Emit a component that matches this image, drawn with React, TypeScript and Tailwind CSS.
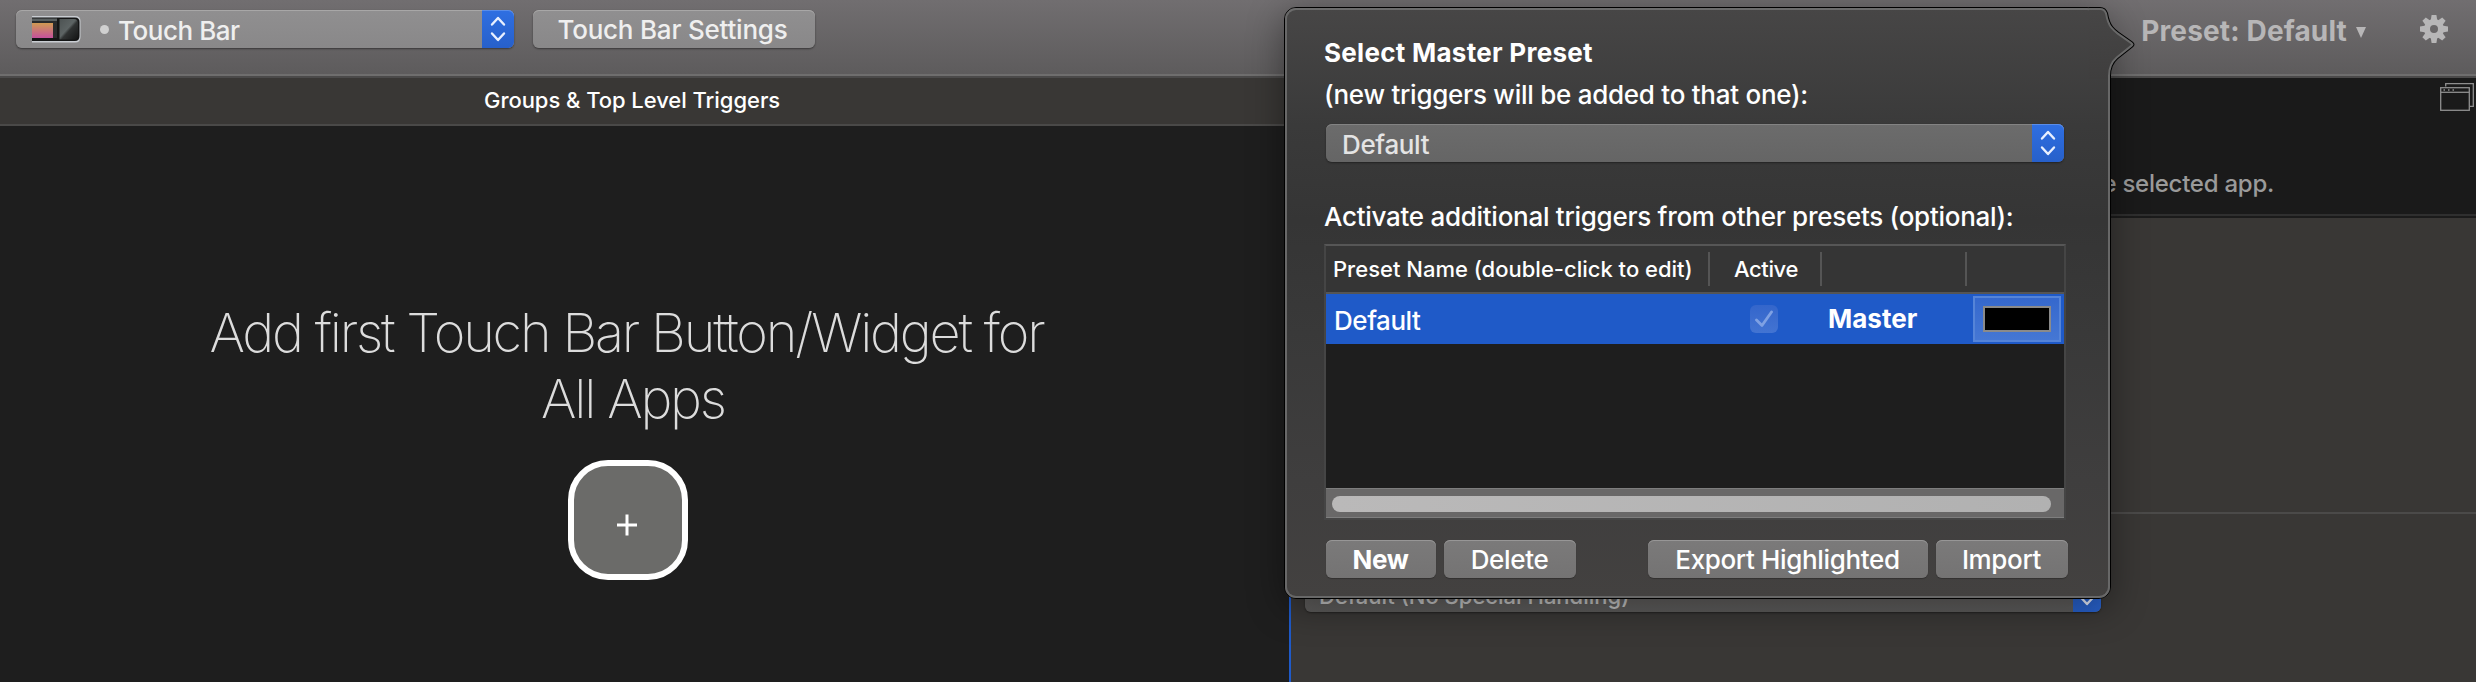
import React from 'react';

function Chevrons({ className = '' }: { className?: string }) {
  return (
    <svg viewBox="0 0 16 26" className={`h-[26px] w-4 ${className}`} fill="none" stroke="#e9f0ff" strokeWidth="2.4" strokeLinecap="round" strokeLinejoin="round">
      <path d="M2 8.5 L8 2 L14 8.5" />
      <path d="M2 17.5 L8 24 L14 17.5" />
    </svg>
  );
}

function DeviceIcon() {
  return (
    <svg viewBox="0 0 52 32" className="h-8 w-[52px]">
      <defs>
        <linearGradient id="screen" x1="0" y1="0" x2="0" y2="1">
          <stop offset="0" stopColor="#d09a52" />
          <stop offset="1" stopColor="#c4519c" />
        </linearGradient>
        <linearGradient id="pad" x1="0" y1="0" x2="1" y2="1">
          <stop offset="0" stopColor="#4d5353" />
          <stop offset="0.45" stopColor="#5d6464" />
          <stop offset="0.55" stopColor="#303333" />
          <stop offset="1" stopColor="#141515" />
        </linearGradient>
      </defs>
      <path d="M0 3 H43 Q48.5 3 48.5 8 V24 Q48.5 29.5 43 29.5 H0 Z" fill="#c9cdd2" />
      <path d="M0 4.5 H43 Q47.5 4.5 47.5 9 V23 Q47.5 28 43 28 H0 Z" fill="#141515" />
      <path d="M0 5.5 H25 V8 H0 Z" fill="#5a6060" />
      <path d="M0 8 H25 V25 H0 Z" fill="#292a2b" />
      <rect x="0" y="10" width="21" height="15" fill="url(#screen)" />
      <path d="M27.5 6 H42 Q46 6 46 10 V22 Q46 26.500 42 26.500 H27.500 Z" fill="url(#pad)" />
    </svg>
  );
}

function Gear() {
  return (
    <svg viewBox="-14 -14 28 28" className="h-7 w-7" fill="#b7b6b7">
      {[0, 45, 90, 135, 180, 225, 270, 315].map((a) => (
        <path key={a} d="M-3.400 -8 L-2.400 -14 H2.400 L3.400 -8 Z" transform={`rotate(${a})`} />
      ))}
      <circle r="7" fill="none" stroke="#b7b6b7" strokeWidth="6" />
    </svg>
  );
}

function WindowsIcon() {
  return (
    <svg viewBox="0 0 34 28" className="h-7 w-[34px]" fill="none" stroke="#8f8f8f" strokeWidth="1.300">
      <path d="M5.700 3.500 V0.700 H33.300 V23.300 H30" />
      <rect x="0.700" y="4.700" width="28.600" height="22.600" />
      <path d="M0.700 9.300 H29.300" />
      <path d="M3.500 7 h1.500 M8 7 h1.500 M12.500 7 h1.500" />
    </svg>
  );
}

function PopoverArrow() {
  const d = 'M-20 0 H11 Q17 0 19 6 Q20.500 15 24 19.500 Q26 22 30 25 L43.500 34.500 Q47.500 37.500 43.500 40.500 L29 52 Q22 58 22 69 V100 H-20 Z';
  return (
    <svg viewBox="0 0 47 72" className="absolute -top-px left-[804px] h-[72px] w-[47px]">
      <defs>
        <clipPath id="edge"><path d={d} /></clipPath>
        <linearGradient id="fade" gradientUnits="userSpaceOnUse" x1="0" y1="0" x2="0" y2="72">
          <stop offset="0" stopColor="#474646" />
          <stop offset="1" stopColor="#3f3e3e" />
        </linearGradient>
      </defs>
      <g clipPath="url(#edge)">
        <path d={d} fill="url(#fade)" />
        <path d={d} fill="none" stroke="#686868" strokeWidth="6" />
        <path d={d} fill="none" stroke="#000" strokeWidth="2" />
      </g>
    </svg>
  );
}

const pushButton =
  'flex h-[38px] items-center justify-center rounded-[6px] bg-linear-to-b from-[#7b7a7a] to-[#747373] pt-px text-[26px] tracking-[-0.35px] text-white shadow-[inset_0_1px_0_#979696,0_1px_1px_rgba(0,0,0,0.25)]';

const blueCap =
  'flex h-full items-center justify-center rounded-r-[6px] bg-linear-to-b from-[#2f6fe2] to-[#2760ca] shadow-[inset_0_1px_0_#5a8de8]';

function PresetTable() {
  return (
    <div className="mt-[11px] flex h-[276px] w-[742px] flex-col border-2 border-[#454545] border-t-[#565656] bg-[#1e1e1e]">
      <div className="flex h-12 shrink-0 items-center border-b-2 border-[#555] bg-[#353535] text-[22px] font-medium">
        <div className="flex h-[34px] w-[384px] items-center border-r-2 border-[#555] pb-px pl-[7px]">Preset Name (double-click to edit)</div>
        <div className="flex h-[34px] w-28 items-center border-r-2 border-[#555] pb-px pl-6 tracking-[-0.4px]">Active</div>
        <div className="h-[34px] w-[145px] border-r-2 border-[#555]" />
      </div>
      <div className="flex h-[50px] shrink-0 items-center bg-[#1f5ac8] text-[26px]">
        <div className="w-[384px] pt-[3px] pl-2 font-medium tracking-[-0.45px]">Default</div>
        <div className="w-28 pl-10">
          <div className="flex h-7 w-7 items-center justify-center rounded-[6px] bg-linear-to-b from-[#3466cb] to-[#4374d2]">
            <svg viewBox="0 0 18 18" className="h-[18px] w-[18px]" fill="none" stroke="#7fa1e3" strokeWidth="2.800" strokeLinecap="round" strokeLinejoin="round">
              <path d="M1.500 10 L7 15.500 L16.500 2" />
            </svg>
          </div>
        </div>
        <div className="w-[145px] pl-[6px] font-bold">Master</div>
        <div className="ml-[6px] flex h-[46px] w-[88px] items-center justify-center border-2 border-[#5584d8] bg-linear-to-b from-[#3568cd] to-[#4577d4]">
          <div className="h-[26px] w-[68px] border-2 border-[#8a8a8a] bg-black" />
        </div>
      </div>
      <div className="flex-1" />
      <div className="flex h-[30px] shrink-0 items-center border-y border-[#7e7e7e] bg-[#696868] pr-[13px] pl-[6px]">
        <div className="mt-px h-4 flex-1 rounded-full bg-linear-to-r from-[#bab9b9] to-[#b1b1b1]" />
      </div>
    </div>
  );
}

function PresetPopover() {
  return (
    <div className="absolute top-[7px] left-[1284px] h-[592px] w-[827px] rounded-[12px] rounded-tr-[24px] border border-black bg-[linear-gradient(180deg,#474646_0%,#3a3a3a_20%,#353535_36%,#393939_55%,#3f3e3e_80%,#434140_100%)] text-white shadow-[0_8px_36px_rgba(0,0,0,0.4)]">
      <div className="h-full rounded-[11px] rounded-tr-[23px] border-2 border-[#686868] border-t-[#6c6c6c] pl-[37px]">
        <div className="flex flex-col">
          <div className="mt-[26px] flex h-[33px] items-center text-[26px] font-bold tracking-[0.280px]">Select Master Preset</div>
          <div className="mt-[9px] flex h-[33px] items-center text-[26px] font-medium tracking-[-0.260px]">(new triggers will be added to that one):</div>
          <div className="mt-[13px] ml-[2px] flex h-[38px] w-[738px] items-center rounded-[6px] bg-linear-to-b from-[#6c6c6c] to-[#656565] shadow-[inset_0_1px_0_#838383,0_1px_2px_rgba(0,0,0,0.4)]">
            <span className="flex-1 pt-[3px] pl-4 text-[26px] font-[450] tracking-[-0.350px] text-[#e4e4e4]">Default</span>
            <div className={`${blueCap} w-8`}><Chevrons /></div>
          </div>
          <div className="mt-[38px] flex h-[33px] items-center text-[26px] font-medium tracking-[-0.280px]">Activate additional triggers from other presets (optional):</div>
          <PresetTable />
          <div className="mt-5 ml-[2px] flex w-[742px]">
            <button className={`${pushButton} w-[110px] pr-px font-bold`}>New</button>
            <button className={`${pushButton} ml-2 w-[132px] pr-px font-medium`}>Delete</button>
            <button className={`${pushButton} ml-auto w-[280px] pr-px font-medium`}>Export Highlighted</button>
            <button className={`${pushButton} ml-2 w-[132px] pr-px font-medium`}>Import</button>
          </div>
        </div>
      </div>
      <PopoverArrow />
    </div>
  );
}

export default function App() {
  return (
    <div className="relative flex h-[682px] w-[2476px] flex-col overflow-hidden bg-[#1e1e1e] font-[Inter,sans-serif] leading-none whitespace-nowrap">
      <header className="flex h-[78px] shrink-0 items-start border-b-2 border-[#4b4a4a] bg-linear-to-b from-[#716e70] to-[#5d5b5c] shadow-[inset_0_-2px_0_#6f6e6e]">
        <div className="mt-[10px] ml-4 flex h-[38px] w-[498px] items-center rounded-[6px] bg-linear-to-b from-[#908f90] to-[#898889] pl-4 shadow-[inset_0_1px_0_#a8a7a7,0_1px_2px_rgba(0,0,0,0.45)]">
          <DeviceIcon />
          <span className="ml-4 h-[9px] w-[9px] rounded-full bg-[#d0d0d0]" />
          <span className="ml-[9px] flex-1 pt-[3px] text-[26px] font-[450] tracking-[-0.450px] text-[#efefef]">Touch Bar</span>
          <div className={`${blueCap} w-8`}><Chevrons /></div>
        </div>
        <button className="mt-[10px] ml-[19px] flex h-[38px] w-[282px] items-center justify-center rounded-[6px] bg-linear-to-b from-[#908f90] to-[#898889] pt-px pr-[3px] text-[26px] font-[450] tracking-[-0.220px] text-[#efefef] shadow-[inset_0_1px_0_#a8a7a7,0_1px_2px_rgba(0,0,0,0.45)]">
          Touch Bar Settings
        </button>
        <div className="mt-[15px] mr-7 ml-auto flex h-7 items-center text-[#b7b6b7]">
          <span className="pt-[3px] text-[28px] font-bold tracking-[0.150px]">Preset: Default</span>
          <svg viewBox="0 0 10 11" className="mt-[7px] ml-[9px] h-[11px] w-[10px]" fill="#b7b6b7"><path d="M0 0 H10 L5 11 Z" /></svg>
          <span className="ml-[54px]"><Gear /></span>
        </div>
      </header>
      <div className="flex flex-1">
        <section className="flex w-[1289px] flex-col bg-[#1e1e1e]">
          <div className="flex h-12 items-center border-b-2 border-[#4a4948] bg-[#393735] pb-[2px] pl-[484px] text-[22px] font-medium tracking-[-0.050px] text-white">
            Groups &amp; Top Level Triggers
          </div>
          <div className="flex w-[1256px] flex-col items-center">
            <h1 className="mt-[174px] pr-[3px] text-center text-[54px] leading-[66px] font-[240] tracking-[-2.200px] text-[#dcdcdc]">
              Add first Touch Bar Button/Widget for
              <span className="block pl-[13px]">All Apps</span>
            </h1>
            <button className="mt-[28px] flex h-[120px] w-[120px] items-center justify-center rounded-[40px] border-[6px] border-white bg-[#6b6b69] pt-[10px] pr-[3px]">
              <svg viewBox="0 0 20 22" className="h-[22px] w-5" stroke="#fff" strokeWidth="3"><path d="M10 0.500 V21.500 M0 11 H20" /></svg>
            </button>
          </div>
        </section>
        <section className="flex flex-1 flex-col border-l-2 border-[#1f5ac8] bg-[#393735]">
          <div className="flex h-[140px] shrink-0 flex-col items-end border-b-2 border-[#1b1b1b] bg-[#1a1a1a] shadow-[inset_0_-2px_0_#2f2f2f]">
            <div className="mt-[5px] mr-[2px]"><WindowsIcon /></div>
            <p className="mt-[61px] mr-[202px] text-[24px] font-[450] tracking-[-0.250px] text-[#9a9a9a]">the selected app.</p>
          </div>
          <div className="mt-[294px] h-[2px] shrink-0 bg-[#4b4a49]" />
          <div className="mt-[60px] ml-[14px] flex h-[38px] w-[796px] shrink-0 items-center rounded-[6px] bg-linear-to-b from-[#6c6a69] to-[#5c5b5a] pl-[14px] shadow-[0_1px_2px_rgba(0,0,0,0.4)]">
            <span className="flex-1 pt-[6px] text-[22px] font-medium text-[#c4c4c4]">Default (No Special Handling)</span>
            <div className={`${blueCap} w-7`}><Chevrons /></div>
          </div>
        </section>
      </div>
      <PresetPopover />
    </div>
  );
}
